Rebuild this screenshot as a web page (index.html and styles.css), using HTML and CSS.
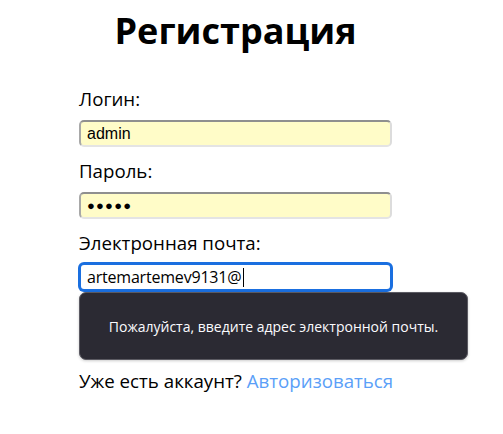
FILE: index.html
```html
<!DOCTYPE html>
<html lang="ru">
<head>
<meta charset="utf-8">
<title>Регистрация</title>
<link rel="stylesheet" href="styles.css">
</head>
<body>
<main class="page">
  <h1 class="title">Регистрация</h1>
  <form class="form">
    <div class="field">
      <label class="label">Логин:</label>
      <div class="input autofill">admin</div>
    </div>
    <div class="field">
      <label class="label">Пароль:</label>
      <div class="input autofill dots">●●●●●</div>
    </div>
    <div class="field email-field">
      <label class="label">Электронная почта:</label>
      <div class="input focused">artemartemev9131@<span class="caret"></span></div>
      <div class="tooltip">Пожалуйста, введите адрес электронной почты.</div>
    </div>
    <p class="footer">Уже есть аккаунт? <a class="link" href="#">Авторизоваться</a></p>
  </form>
</main>
</body>
</html>
```
FILE: styles.css
```css
html, body {
  margin: 0;
  padding: 0;
  background: #ffffff;
}
body {
  font-family: "Open Sans", "Noto Sans", sans-serif;
  color: #000;
}
.page {
  width: 313px;
  margin-left: 79px;
  padding-top: 6px;
}
.title {
  margin: 0;
  font-family: "Open Sans", sans-serif;
  font-size: 36px;
  font-weight: 700;
  text-align: center;
  line-height: 50px;
}
.form {
  display: flex;
  flex-direction: column;
  margin-top: 30px;
}
.field {
  display: flex;
  flex-direction: column;
  margin-bottom: 11px;
}
.email-field {
  position: relative;
  margin-bottom: 77px;
}
.label {
  font-family: "Open Sans", sans-serif;
  font-size: 18.7px;
  line-height: 26px;
  margin-bottom: 8px;
}
.input {
  box-sizing: border-box;
  height: 27px;
  border-radius: 5px;
  border: 2px solid;
  border-color: #8f8f8f #dcdcdc #e4e4e4 #a8a8a8;
  padding: 0 6px;
  font-family: "Liberation Sans", Arial, sans-serif;
  font-size: 16px;
  line-height: 23px;
  display: flex;
  align-items: center;
}
.autofill {
  background: #fffcc8;
}
.dots {
  font-size: 13px;
  letter-spacing: 1.2px;
}
.focused {
  background: #fff;
  border-color: #1a6fe0;
  box-shadow: 0 0 0 1px #1a6fe0;
  height: 28px;
  margin-top: -1px;
  font-family: "Open Sans", sans-serif;
  font-size: 16px;
  letter-spacing: -0.2px;
}
.caret {
  display: inline-block;
  width: 1px;
  height: 19px;
  background: #000;
  margin-left: 2px;
}
.tooltip {
  position: absolute;
  left: 0;
  top: 100%;
  width: 389px;
  height: 68px;
  box-sizing: border-box;
  margin-top: 1px;
  background: #2b2a33;
  border: 1px solid #5b5a62;
  border-radius: 7px;
  color: #fbfbfe;
  font-family: "Open Sans", sans-serif;
  font-size: 14px;
  display: flex;
  align-items: center;
  justify-content: center;
  box-shadow: 0 1px 3px rgba(0,0,0,0.2);
}
.footer {
  margin: 0;
  font-size: 18.7px;
  line-height: 26px;
  white-space: nowrap;
}
.link {
  color: #5b9ff8;
  text-decoration: none;
}
```
